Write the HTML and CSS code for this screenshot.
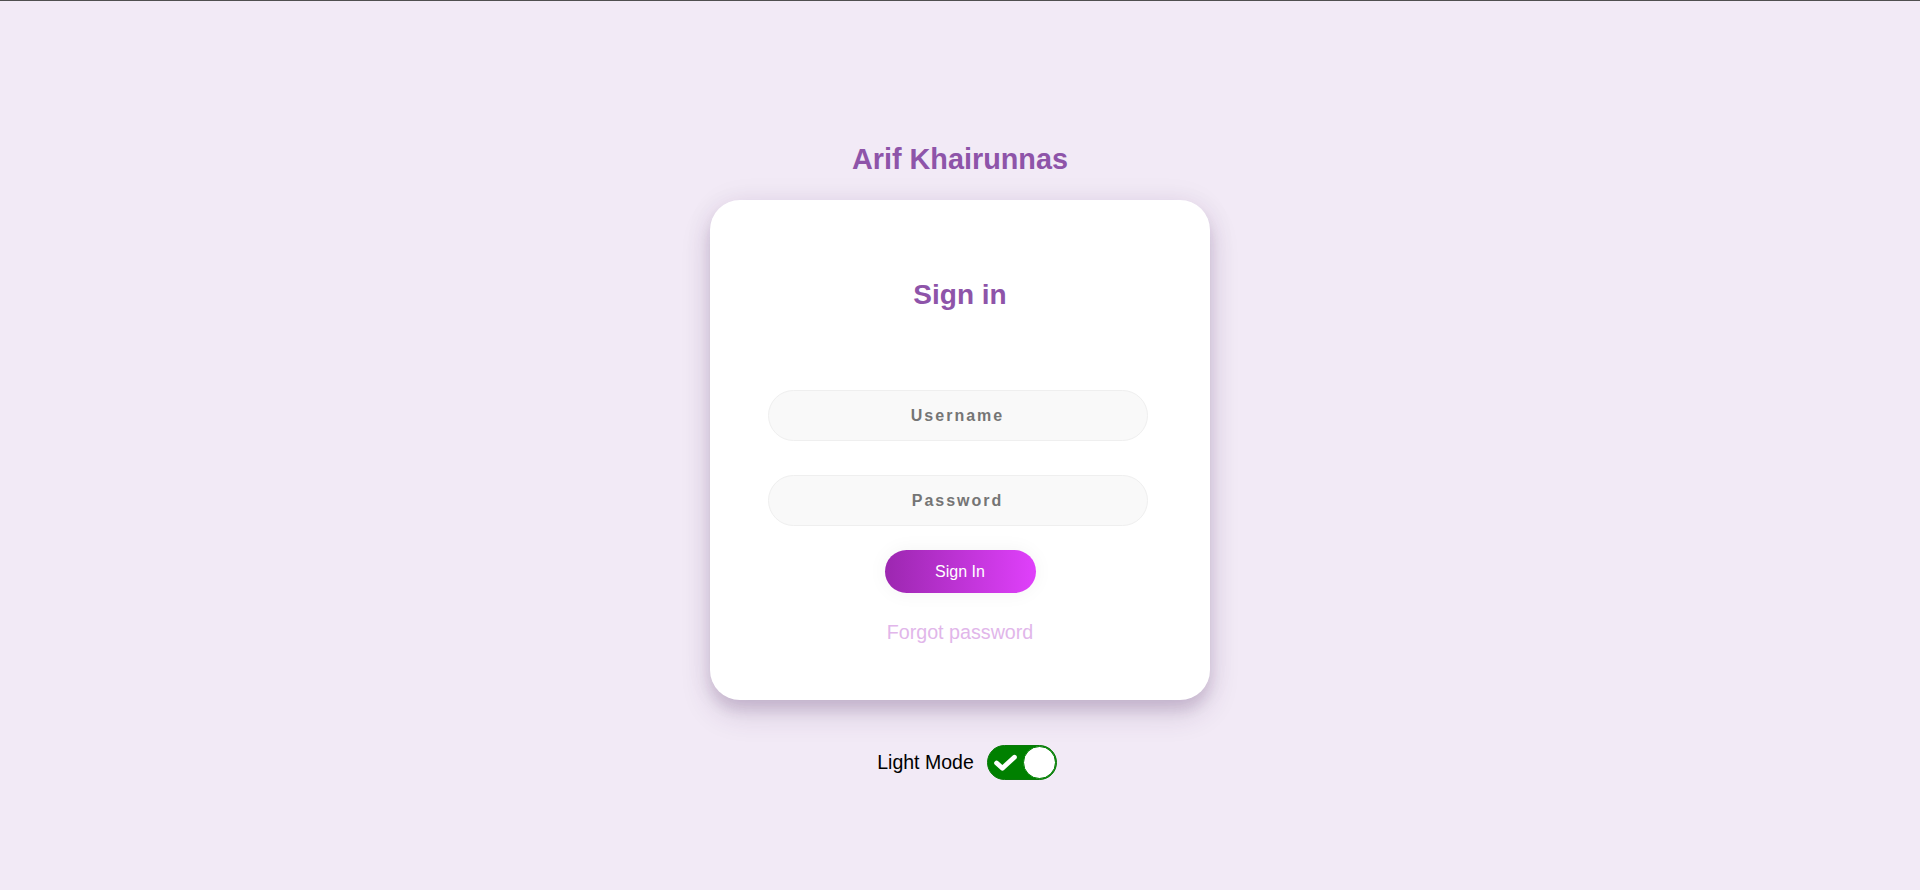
FILE: index.html
```
<!DOCTYPE html>
<html lang="en">
<head>
<meta charset="utf-8">
<title>Sign in</title>
<link rel="stylesheet" href="styles.css">
</head>
<body>
<main class="page">
  <h1 class="brand">Arif Khairunnas</h1>
  <form class="card">
    <h2 class="card-title">Sign in</h2>
    <input class="field field-user" type="text" placeholder="Username">
    <input class="field field-pass" type="password" placeholder="Password">
    <button class="submit" type="button">Sign In</button>
    <a class="forgot" href="#">Forgot password</a>
  </form>
  <div class="mode">
    <span class="mode-label">Light Mode</span>
    <span class="toggle">
      <svg class="check" width="23" height="18" viewBox="0 0 23 18"><polyline points="2.6,9 8.4,14.2 20.4,3.2" fill="none" stroke="#fff" stroke-width="4.8" stroke-linecap="round" stroke-linejoin="round"/></svg>
      <span class="knob"></span>
    </span>
  </div>
</main>
</body>
</html>
```
FILE: styles.css
```
html, body {
  margin: 0;
  padding: 0;
}
body {
  min-height: 890px;
  box-sizing: border-box;
  border-top: 1px solid #505050;
  background: #f2eaf6;
  font-family: "Liberation Sans", Arial, sans-serif;
}
.page {
  display: flex;
  flex-direction: column;
  align-items: center;
  padding-top: 142px;
}
.brand {
  margin: 0;
  font-size: 28.8px;
  line-height: 33px;
  font-weight: bold;
  color: #8e54a9;
}
.card {
  margin-top: 24px;
  width: 500px;
  height: 500px;
  box-sizing: border-box;
  background: #fff;
  border-radius: 30px;
  box-shadow: 0 14px 30px rgba(70, 30, 90, 0.16), 0 10px 12px rgba(70, 30, 90, 0.1), 0 0 30px rgba(70, 30, 90, 0.06);
  display: flex;
  flex-direction: column;
  align-items: center;
  padding-top: 79px;
}
.card-title {
  margin: 0;
  font-size: 28px;
  line-height: 32px;
  font-weight: bold;
  color: #8e54a9;
}
.field {
  box-sizing: border-box;
  width: 380px;
  height: 51px;
  border: 1px solid #efefef;
  border-radius: 26px;
  background: #f9f9f9;
  font-family: inherit;
  font-size: 16px;
  font-weight: bold;
  letter-spacing: 2px;
  text-align: center;
  color: #555;
  outline: none;
  margin-right: 5px;
}
.field::placeholder {
  color: #757575;
  opacity: 1;
}
.field-user {
  margin-top: 79px;
}
.field-pass {
  margin-top: 34px;
}
.submit {
  margin-top: 24px;
  width: 151px;
  height: 43px;
  border: none;
  border-radius: 22px;
  background: linear-gradient(to right, #9c27b0, #e040fb);
  color: #fff;
  font-family: inherit;
  font-size: 16px;
  box-shadow: 0 0 20px rgba(0, 0, 0, 0.05);
  cursor: pointer;
}
.forgot {
  margin-top: 28px;
  font-size: 19.7px;
  line-height: 22px;
  color: #e1b6ea;
  text-decoration: none;
}
.mode {
  margin-top: 45px;
  padding-left: 14px;
  display: flex;
  align-items: center;
  gap: 13px;
}
.mode-label {
  font-size: 19.5px;
  color: #000;
}
.toggle {
  box-sizing: border-box;
  width: 70px;
  height: 35px;
  border-radius: 18px;
  background: #008000;
  border: 1px solid #0a7a0a;
  display: flex;
  align-items: center;
  justify-content: space-between;
  padding: 0 0 0 6px;
}
.check {
  display: block;
  margin-top: 1px;
}
.knob {
  width: 33px;
  height: 33px;
  box-sizing: border-box;
  border-radius: 50%;
  background: #fff;
  border: 1px solid #008000;
}
```
